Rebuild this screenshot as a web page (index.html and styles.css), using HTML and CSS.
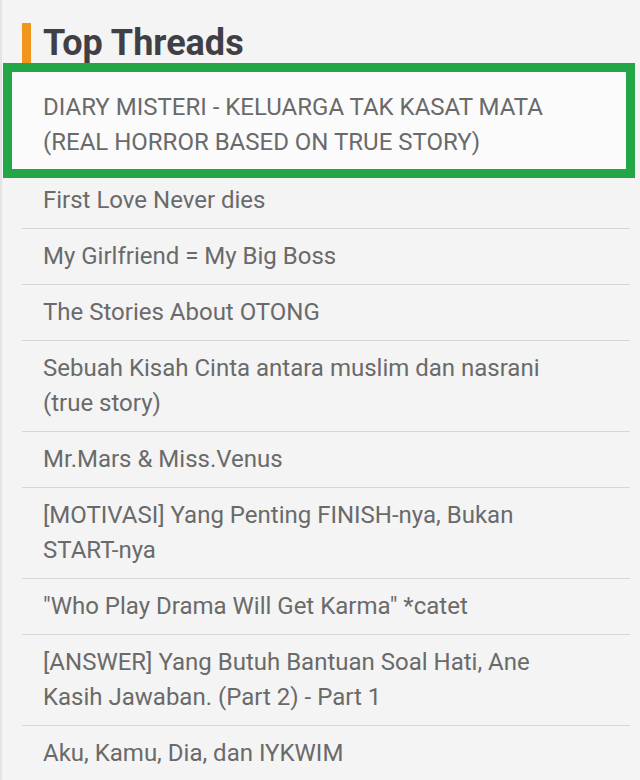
FILE: index.html
```html
<!DOCTYPE html>
<html lang="id">
<head>
    <meta charset="UTF-8">
    <meta name="viewport" content="width=device-width, initial-scale=1.0">
    <title>Top Threads</title>
    <link rel="stylesheet" href="styles.css">
</head>
<body>

    <!-- Top Threads widget -->
    <div class="widget">
        <h2 class="widget-title">Top Threads</h2>
        <ul class="thread-list">
            <li class="thread active">DIARY MISTERI - KELUARGA TAK KASAT MATA (REAL HORROR BASED ON TRUE STORY)</li>
            <li class="thread">First Love Never dies</li>
            <li class="thread">My Girlfriend = My Big Boss</li>
            <li class="thread">The Stories About OTONG</li>
            <li class="thread">Sebuah Kisah Cinta antara muslim dan nasrani (true story)</li>
            <li class="thread">Mr.Mars &amp; Miss.Venus</li>
            <li class="thread">[MOTIVASI] Yang Penting FINISH-nya, Bukan START-nya</li>
            <li class="thread">"Who Play Drama Will Get Karma" *catet</li>
            <li class="thread">[ANSWER] Yang Butuh Bantuan Soal Hati, Ane Kasih Jawaban. (Part 2) - Part 1</li>
            <li class="thread">Aku, Kamu, Dia, dan IYKWIM</li>
        </ul>
    </div>

</body>
</html>
```

FILE: styles.css
```css
body {
    margin: 0;
    padding: 0;
    background: #f4f4f4;
    font-family: Roboto, "Liberation Sans", Arial, sans-serif;
}

.widget {
    min-height: 780px;
    border-left: 2px solid #e4e4e4;
    padding: 23px 10px 0 20px;
    box-sizing: border-box;
}

/* Heading with orange accent */
.widget-title {
    margin: 0 0 17px 0;
    border-left: 9px solid #f0961c;
    padding-left: 12px;
    font-size: 36px;
    line-height: 40px;
    font-weight: bold;
    color: #3f3f45;
}

.thread-list {
    list-style: none;
    margin: 0;
    padding: 0;
}
.thread {
    padding: 10px 50px 10px 21px;
    font-size: 24px;
    line-height: 35px;
    color: #6a6a6a;
    border-bottom: 1px solid #d6d6d6;
    cursor: pointer;
}
.thread:last-child {
    border-bottom: none;
}

/* Selected thread gets a green frame */
.thread.active {
    position: relative;
    z-index: 0;
    padding-bottom: 12px;
}
.thread.active::before {
    content: "";
    position: absolute;
    top: -17px;
    right: -5px;
    bottom: -6px;
    left: -19px;
    border: 9px solid #22a646;
    background: #fbfbfb;
    z-index: -1;
}
```
